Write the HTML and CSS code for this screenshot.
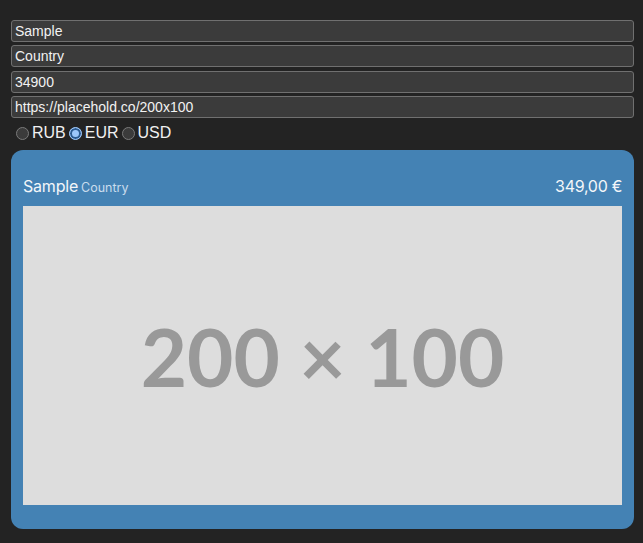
FILE: index.html
```html
<!DOCTYPE html>
<html>
<head>
<meta charset="utf-8">
<link rel="stylesheet" href="styles.css">
</head>
<body>
<div class="page">
  <form class="form">
    <input class="field" type="text" value="Sample">
    <input class="field" type="text" value="Country">
    <input class="field" type="text" value="34900">
    <input class="field" type="text" value="https://placehold.co/200x100">
    <div class="radios">
      <label class="opt"><input class="radio" type="radio" name="cur"><span>RUB</span></label>
      <label class="opt"><input class="radio" type="radio" name="cur" checked><span>EUR</span></label>
      <label class="opt"><input class="radio" type="radio" name="cur"><span>USD</span></label>
    </div>
  </form>
  <div class="card">
    <div class="card-head">
      <div class="titles"><span class="name">Sample</span><span class="country">Country</span></div>
      <span class="price">349,00 €</span>
    </div>
    <div class="image"><span class="image-text">200 × 100</span></div>
  </div>
</div>
</body>
</html>
```
FILE: styles.css
```css
html, body {
  margin: 0;
  padding: 0;
  background: #232323;
}
.page {
  padding: 20px 9px 0 11px;
  display: flex;
  flex-direction: column;
}
.form {
  display: flex;
  flex-direction: column;
  gap: 3.4px;
  margin: 0;
}
.field {
  box-sizing: border-box;
  width: 100%;
  height: 22px;
  margin: 0;
  padding: 0 3px;
  background: #3b3b3b;
  border: 1px solid #707070;
  border-radius: 3px;
  color: #f2f2f2;
  font-family: "Liberation Sans", Arial, sans-serif;
  font-size: 14px;
  outline: none;
}
.radios {
  display: flex;
  align-items: center;
  height: 23px;
  padding-left: 5px;
  gap: 3px;
}
.opt {
  display: flex;
  align-items: center;
  gap: 3px;
  color: #f0f0f0;
  font-family: "Liberation Sans", Arial, sans-serif;
  font-size: 16px;
}
.radio {
  appearance: none;
  -webkit-appearance: none;
  width: 13px;
  height: 13px;
  margin: 0;
  border-radius: 50%;
  background: #3b3b3b;
  border: 1px solid #7a7a7a;
  box-sizing: border-box;
}
.radio:checked {
  background: #9cc7fb;
  border: 1px solid #9cc7fb;
  box-shadow: inset 0 0 0 2px #2b5a90;
}
.card {
  margin-top: 5.4px;
  background: #4482b4;
  border-radius: 12px;
  padding: 24px 12px 24px 12px;
  font-family: Inter, "Open Sans", sans-serif;
  color: #f3f6f9;
}
.card-head {
  display: flex;
  justify-content: space-between;
  align-items: baseline;
  height: 30px;
  padding-top: 2px;
}
.titles {
  display: flex;
  align-items: baseline;
  gap: 3px;
}
.name {
  font-size: 16px;
  letter-spacing: -0.2px;
}
.country {
  font-size: 12.5px;
  color: #c9dced;
}
.price {
  font-size: 16px;
  letter-spacing: -0.3px;
}
.image {
  background: #dddddd;
  aspect-ratio: 2 / 1;
  display: flex;
  align-items: center;
  justify-content: center;
}
.image-text {
  font-family: Lato, sans-serif;
  font-weight: 700;
  font-size: 80px;
  color: #999999;
}
```
